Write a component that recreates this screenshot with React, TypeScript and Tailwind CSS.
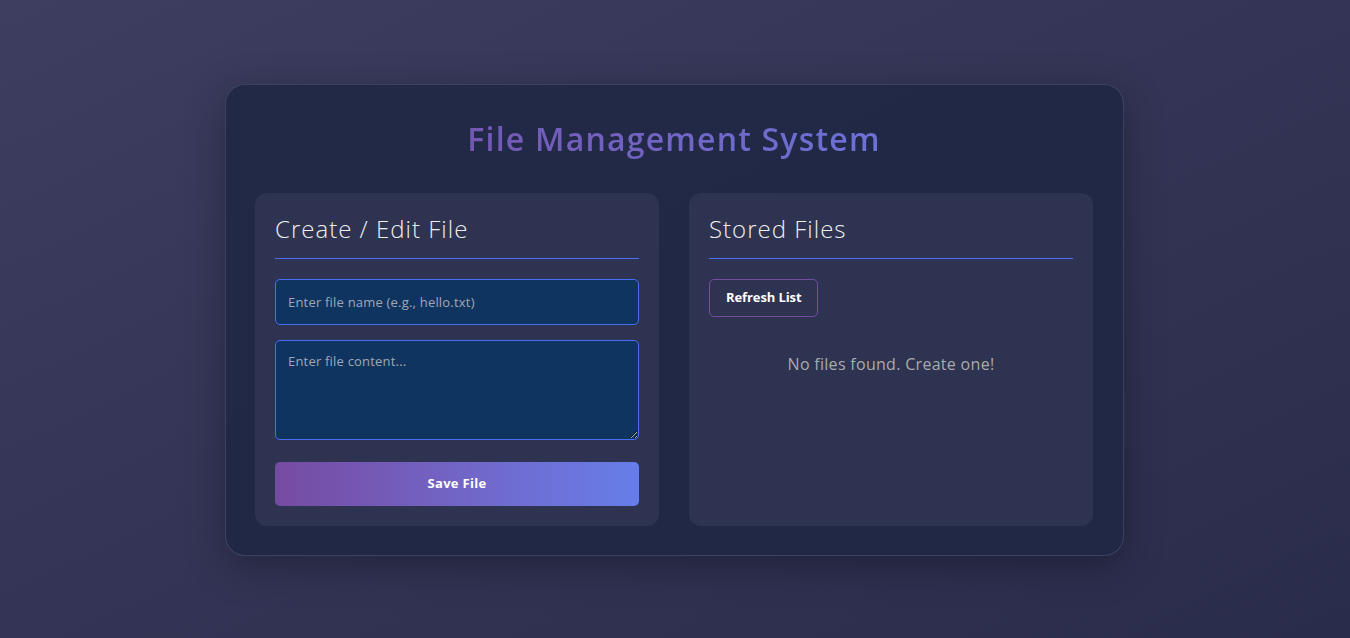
import React from "react";

export default function App() {
  return (
    <div
      className="min-h-[638px] w-full flex bg-gradient-to-br from-[#3d3e60] to-[#2a2c4b]"
      style={{ fontFamily: '"Open Sans", "Liberation Sans", sans-serif' }}
    >
      <div className="ml-[225px] mt-[84px] mb-[82px] w-[899px] h-[472px] rounded-[20px] border border-[#ffffff1f] bg-[#212846]/95 shadow-[0_10px_40px_rgba(0,0,0,0.3)] pl-[29px] pr-[30px] pt-[30px] pb-[30px] flex flex-col">
        <h1 className="text-center text-[32px] leading-[48px] font-semibold tracking-[1.2px] bg-gradient-to-r from-[#764ba2] to-[#667eea] bg-clip-text text-transparent mb-[30px]">
          File Management System
        </h1>
        <div className="grid grid-cols-2 gap-[30px] flex-1">
          <div className="rounded-[12px] bg-[#2d3351] p-[20px] flex flex-col">
            <h2 className="text-[24px] font-light tracking-[1px] text-[#eeeeee] leading-[32px] pb-[13px] border-b border-b-[#4f6ef7] mb-[20px]">
              Create / Edit File
            </h2>
            <input
              placeholder="Enter file name (e.g., hello.txt)"
              className="h-[46px] w-full rounded-[5px] border border-[#4a6cf7] bg-[#0f3460] px-[12px] text-[13px] tracking-[0.2px] text-white placeholder:text-[#a0a8b8] outline-none"
            />
            <textarea
              placeholder="Enter file content..."
              className="mt-[15px] h-[100px] w-full rounded-[5px] border border-[#4a6cf7] bg-[#0f3460] px-[12px] py-[11px] text-[13px] tracking-[0.2px] text-white placeholder:text-[#a0a8b8] outline-none"
            />
            <button className="mt-[22px] h-[44px] w-full rounded-[5px] bg-gradient-to-r from-[#764ba2] to-[#667eea] text-white text-[13px] font-bold tracking-[0.3px]">
              Save File
            </button>
          </div>
          <div className="rounded-[12px] bg-[#2d3351] p-[20px] flex flex-col">
            <h2 className="text-[24px] font-light tracking-[1px] text-[#eeeeee] leading-[32px] pb-[13px] border-b border-b-[#4f6ef7] mb-[20px]">
              Stored Files
            </h2>
            <div>
              <button className="h-[38px] px-[16px] rounded-[5px] border border-[#764ba2] bg-transparent text-white text-[13px] font-bold tracking-[-0.1px]">
                Refresh List
              </button>
            </div>
            <p className="mt-[35px] text-center text-[16px] tracking-[0.3px] text-[#aaaaaa]">
              No files found. Create one!
            </p>
          </div>
        </div>
      </div>
    </div>
  );
}
